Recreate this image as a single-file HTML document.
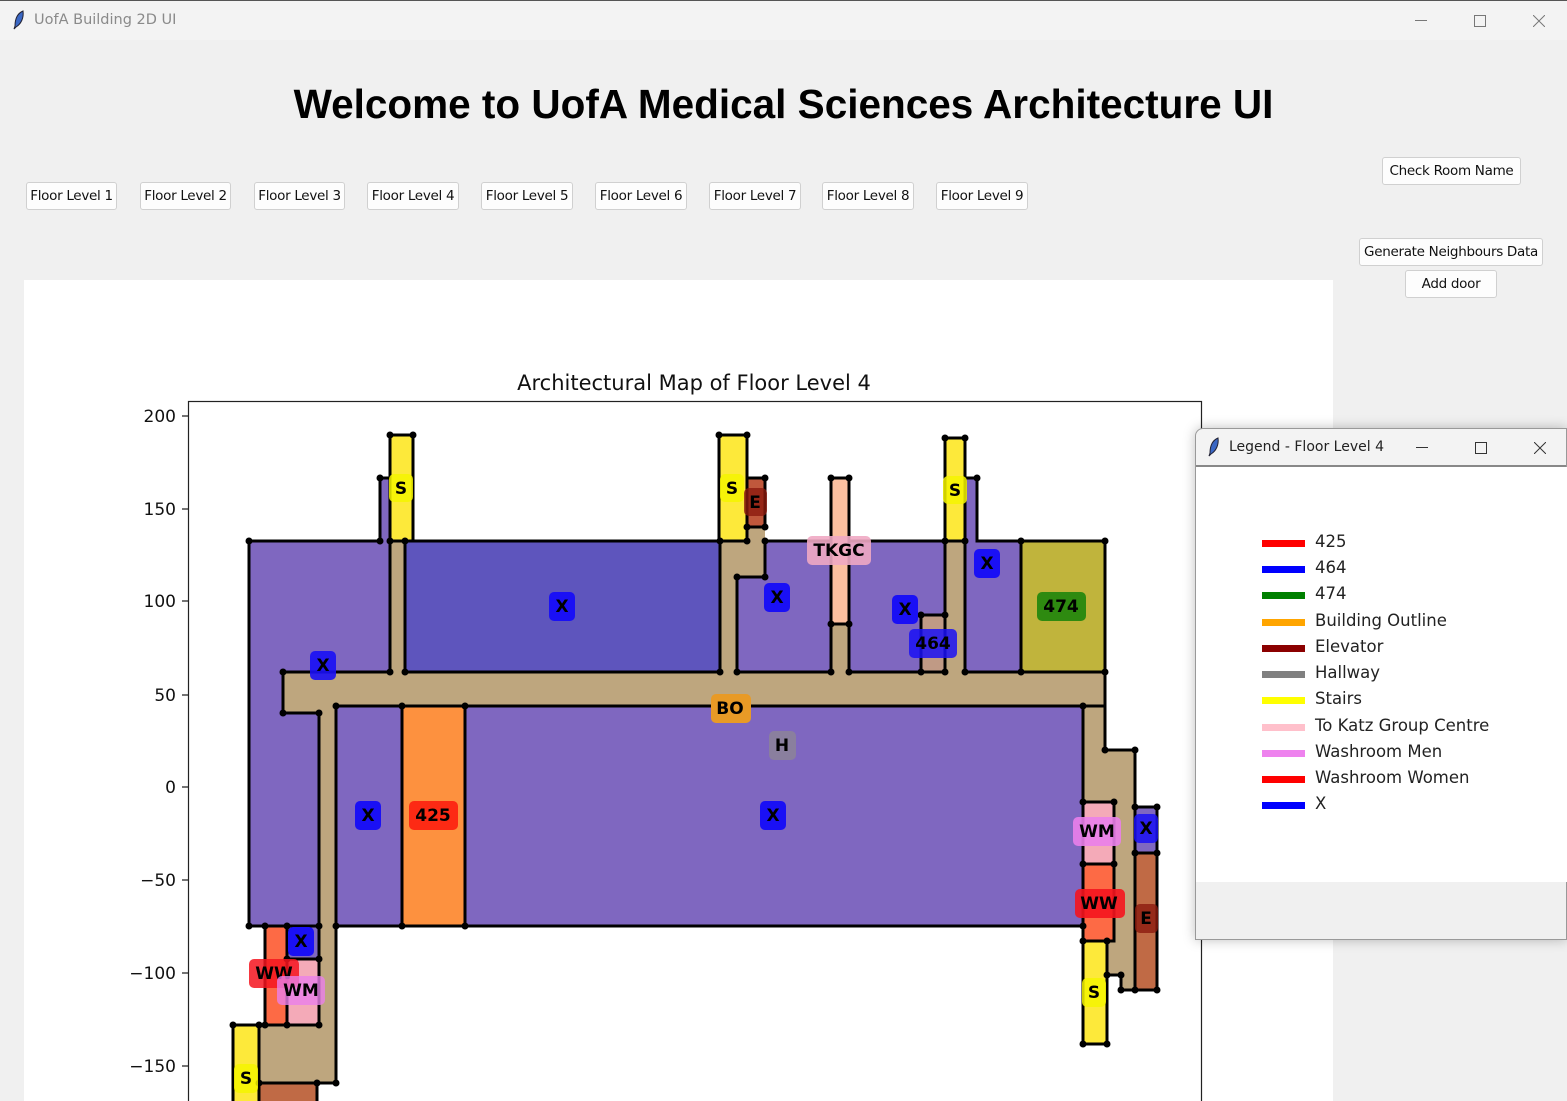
<!DOCTYPE html>
<html><head><meta charset="utf-8"><style>
*{margin:0;padding:0;box-sizing:border-box}
body{width:1567px;height:1101px;overflow:hidden;background:#f0f0f0;font-family:"Liberation Sans",sans-serif;position:relative}
.tb{position:absolute;left:0;top:0;width:1567px;height:40px;background:#f3f3f3;border-top:1px solid #555}
.tb span{position:absolute;left:34px;top:11px;font-size:14.5px;color:#8a8a8a;font-family:"DejaVu Sans",sans-serif}
h1{position:absolute;left:0;width:1567px;top:81px;text-align:center;font-size:40.5px;font-weight:bold;color:#000}
.btn{position:absolute;height:28px;background:#fdfdfd;border:1px solid #d0d0d0;border-radius:3px;font-family:"DejaVu Sans",sans-serif;font-size:13.5px;color:#111;text-align:center;line-height:26px;letter-spacing:-0.3px}
.canvas{position:absolute;left:24px;top:280px;width:1309px;height:821px;background:#fff}
.leg{position:absolute;left:1195px;top:428px;width:372px;height:512px;background:#f0f0f0;border:1px solid #999;border-radius:8px 0 0 0;box-shadow:0 0 12px rgba(0,0,0,.25)}
.leg .lt{height:38px;background:#f3f3f3;border-bottom:2px solid #888;border-radius:8px 0 0 0;position:relative}
.leg .lt span{position:absolute;left:33px;top:10px;font-size:14px;font-family:"DejaVu Sans",sans-serif;color:#222}
.leg .lc{position:absolute;left:0;top:38px;width:371px;height:415px;background:#fff}
.li{position:absolute;left:66px;font-family:"DejaVu Sans",sans-serif;font-size:16.5px;color:#222}
.li i{position:absolute;left:0;top:8px;width:43px;height:7px}
.li span{position:absolute;left:53px;top:0;white-space:nowrap}
</style></head><body>
<div class="tb"><svg style="position:absolute;left:12px;top:9px" width="14" height="20" viewBox="0 0 14 20"><path d="M11 1 C4 4 3 11 3 16 L2 19 L4 17 C9 14 12 8 11 1Z" fill="#3a67c4" stroke="#223" stroke-width="1"/></svg><span>UofA Building 2D UI</span>
<svg style="left:1415px;top:19px;position:absolute" width="12" height="2"><rect width="12" height="1" fill="#777"/></svg>
<svg style="left:1474px;top:14px;position:absolute" width="12" height="12"><rect x=".5" y=".5" width="11" height="11" fill="none" stroke="#777"/></svg>
<svg style="left:1533px;top:14px;position:absolute" width="12" height="12"><path d="M0 0L12 12M12 0L0 12" stroke="#777"/></svg></div>
<h1>Welcome to UofA Medical Sciences Architecture UI</h1>
<div class="btn" style="left:26px;top:182px;width:91px">Floor Level 1</div>
<div class="btn" style="left:140px;top:182px;width:91px">Floor Level 2</div>
<div class="btn" style="left:254px;top:182px;width:91px">Floor Level 3</div>
<div class="btn" style="left:367px;top:182px;width:92px">Floor Level 4</div>
<div class="btn" style="left:481px;top:182px;width:92px">Floor Level 5</div>
<div class="btn" style="left:595px;top:182px;width:92px">Floor Level 6</div>
<div class="btn" style="left:709px;top:182px;width:92px">Floor Level 7</div>
<div class="btn" style="left:822px;top:182px;width:92px">Floor Level 8</div>
<div class="btn" style="left:936px;top:182px;width:92px">Floor Level 9</div>
<div class="btn" style="left:1382px;top:157px;width:139px">Check Room Name</div>
<div class="btn" style="left:1359px;top:238px;width:184px">Generate Neighbours Data</div>
<div class="btn" style="left:1405px;top:270px;width:92px">Add door</div>
<div class="canvas"></div>
<svg style="position:absolute;left:0;top:0" width="1567" height="1101" viewBox="0 0 1567 1101" font-family="DejaVu Sans,sans-serif">
<defs><clipPath id="c"><rect x="24" y="280" width="1309" height="821"/></clipPath></defs>
<g clip-path="url(#c)">
<text x="694" y="390" font-size="21" text-anchor="middle" fill="#111">Architectural Map of Floor Level 4</text>
<rect x="188.5" y="401.5" width="1013" height="720" fill="none" stroke="#222" stroke-width="1.2"/>
<g font-size="17" text-anchor="end" fill="#111">
<text x="176" y="422">200</text><text x="176" y="515">150</text><text x="176" y="607">100</text><text x="176" y="701">50</text><text x="176" y="793">0</text><text x="176" y="886">−50</text><text x="176" y="979">−100</text><text x="176" y="1072">−150</text></g>
<g stroke="#222" stroke-width="1.2"><path d="M182 416H188M182 509H188M182 601H188M182 695H188M182 787H188M182 880H188M182 973H188M182 1066H188"/></g>
<g stroke="#000" stroke-width="3" stroke-linejoin="miter">
<path fill="#bea67e" d="M283 672H1105V750H1135V990H1121V975H1107V1044H1083V706H336V1083H259V1025H319V713H283Z" stroke="none"/>
<rect x="390" y="541" width="15" height="131" fill="#bea67e" stroke="none"/>
<path fill="#bea67e" stroke="none" d="M720 527H765V577H737V672H720Z"/>
<rect x="831" y="624" width="18" height="48" fill="#bea67e" stroke="none"/>
<rect x="945" y="541" width="20" height="131" fill="#bea67e" stroke="none"/>
<path fill="#7f67c0" d="M249 541H380V478H390V672H283V713H319V926H249Z"/>
<rect x="405" y="541" width="315" height="131" fill="#5e55bd"/>
<path fill="#7f67c0" d="M737 577H765V541H831V672H737Z"/>
<path fill="#7f67c0" d="M849 541H945V615H921V672H849Z"/>
<rect x="921" y="615" width="24" height="57" fill="#c09a85"/>
<path fill="#7f67c0" d="M965 478H977V541H1021V672H965Z"/>
<rect x="1021" y="541" width="84" height="131" fill="#c0b43c"/>
<rect x="390" y="435" width="23" height="106" fill="#fde93a"/>
<rect x="719" y="435" width="28" height="106" fill="#fde93a"/>
<rect x="747" y="478" width="18" height="49" fill="#c0583c"/>
<rect x="831" y="478" width="18" height="146" fill="#fcc0a0"/>
<rect x="945" y="438" width="20" height="103" fill="#fde93a"/>
<rect x="336" y="706" width="66" height="220" fill="#7f67c0"/>
<rect x="402" y="706" width="63" height="220" fill="#fd913f"/>
<rect x="465" y="706" width="618" height="220" fill="#7f67c0"/>
<rect x="265" y="926" width="22" height="99" fill="#fd6a45"/>
<rect x="287" y="926" width="32" height="33" fill="#7f67c0"/>
<rect x="287" y="959" width="32" height="66" fill="#f4aab8"/>
<rect x="233" y="1025" width="26" height="90" fill="#fde93a"/>
<rect x="259" y="1083" width="58" height="30" fill="#c06a45"/>
<rect x="1083" y="802" width="31" height="62" fill="#f4aab8"/>
<rect x="1083" y="864" width="31" height="77" fill="#fd6a45"/>
<rect x="1083" y="941" width="24" height="103" fill="#fde93a"/>
<rect x="1135" y="807" width="22" height="46" fill="#7f67c0"/>
<rect x="1135" y="853" width="22" height="137" fill="#c06a45"/>
<path fill="none" d="M283 672V713H319M336 706V1083H259M1083 706H1105V750H1135V990H1121V975H1107M1105 672V750"/>
</g>
<g fill="#000">
<circle cx="249" cy="541" r="3.5"/><circle cx="380" cy="541" r="3.5"/><circle cx="380" cy="478" r="3.5"/><circle cx="390" cy="435" r="3.5"/><circle cx="413" cy="435" r="3.5"/><circle cx="390" cy="541" r="3.5"/><circle cx="405" cy="541" r="3.5"/><circle cx="390" cy="672" r="3.5"/><circle cx="405" cy="672" r="3.5"/><circle cx="283" cy="672" r="3.5"/><circle cx="283" cy="713" r="3.5"/><circle cx="319" cy="713" r="3.5"/><circle cx="719" cy="435" r="3.5"/><circle cx="747" cy="435" r="3.5"/><circle cx="720" cy="541" r="3.5"/><circle cx="720" cy="672" r="3.5"/><circle cx="747" cy="541" r="3.5"/><circle cx="765" cy="478" r="3.5"/><circle cx="747" cy="527" r="3.5"/><circle cx="765" cy="527" r="3.5"/><circle cx="765" cy="541" r="3.5"/><circle cx="737" cy="577" r="3.5"/><circle cx="765" cy="577" r="3.5"/><circle cx="737" cy="672" r="3.5"/><circle cx="831" cy="478" r="3.5"/><circle cx="849" cy="478" r="3.5"/><circle cx="831" cy="624" r="3.5"/><circle cx="849" cy="624" r="3.5"/><circle cx="831" cy="672" r="3.5"/><circle cx="849" cy="672" r="3.5"/><circle cx="921" cy="615" r="3.5"/><circle cx="945" cy="615" r="3.5"/><circle cx="921" cy="672" r="3.5"/><circle cx="945" cy="672" r="3.5"/><circle cx="945" cy="438" r="3.5"/><circle cx="965" cy="438" r="3.5"/><circle cx="977" cy="478" r="3.5"/><circle cx="945" cy="541" r="3.5"/><circle cx="965" cy="541" r="3.5"/><circle cx="965" cy="672" r="3.5"/><circle cx="1021" cy="541" r="3.5"/><circle cx="1105" cy="541" r="3.5"/><circle cx="1021" cy="672" r="3.5"/><circle cx="1105" cy="672" r="3.5"/><circle cx="336" cy="706" r="3.5"/><circle cx="402" cy="706" r="3.5"/><circle cx="465" cy="706" r="3.5"/><circle cx="1083" cy="706" r="3.5"/><circle cx="1105" cy="750" r="3.5"/><circle cx="1135" cy="750" r="3.5"/><circle cx="249" cy="926" r="3.5"/><circle cx="265" cy="926" r="3.5"/><circle cx="287" cy="926" r="3.5"/><circle cx="319" cy="926" r="3.5"/><circle cx="336" cy="926" r="3.5"/><circle cx="402" cy="926" r="3.5"/><circle cx="465" cy="926" r="3.5"/><circle cx="1083" cy="926" r="3.5"/><circle cx="287" cy="959" r="3.5"/><circle cx="319" cy="959" r="3.5"/><circle cx="233" cy="1025" r="3.5"/><circle cx="259" cy="1025" r="3.5"/><circle cx="265" cy="1025" r="3.5"/><circle cx="287" cy="1025" r="3.5"/><circle cx="319" cy="1025" r="3.5"/><circle cx="259" cy="1083" r="3.5"/><circle cx="317" cy="1083" r="3.5"/><circle cx="336" cy="1083" r="3.5"/><circle cx="1083" cy="802" r="3.5"/><circle cx="1114" cy="802" r="3.5"/><circle cx="1083" cy="864" r="3.5"/><circle cx="1114" cy="864" r="3.5"/><circle cx="1083" cy="941" r="3.5"/><circle cx="1107" cy="941" r="3.5"/><circle cx="1083" cy="1044" r="3.5"/><circle cx="1107" cy="1044" r="3.5"/><circle cx="1135" cy="807" r="3.5"/><circle cx="1157" cy="807" r="3.5"/><circle cx="1135" cy="853" r="3.5"/><circle cx="1157" cy="853" r="3.5"/><circle cx="1121" cy="990" r="3.5"/><circle cx="1135" cy="990" r="3.5"/><circle cx="1157" cy="990" r="3.5"/><circle cx="1107" cy="975" r="3.5"/><circle cx="1121" cy="975" r="3.5"/>
</g>
<g font-weight="bold" font-size="17" text-anchor="middle">
<rect x="389" y="474" width="24" height="28" rx="5" fill="#f5f500" opacity=".85"/><text x="401" y="494">S</text>
<rect x="720" y="474" width="24" height="28" rx="5" fill="#f5f500" opacity=".85"/><text x="732" y="494">S</text>
<rect x="744" y="488" width="23" height="28" rx="5" fill="#8b1a0e" opacity=".8"/><text x="755" y="508">E</text>
<rect x="943" y="476" width="24" height="28" rx="5" fill="#f5f500" opacity=".85"/><text x="955" y="496">S</text>
<rect x="807" y="536" width="64" height="29" rx="5" fill="#f0a9c3" opacity=".9"/><text x="839" y="556">TKGC</text>
<rect x="549" y="592" width="26" height="29" rx="5" fill="#1a10f5"/><text x="562" y="612">X</text>
<rect x="764" y="583" width="26" height="29" rx="5" fill="#1a10f5"/><text x="777" y="603">X</text>
<rect x="892" y="595" width="26" height="29" rx="5" fill="#1a10f5"/><text x="905" y="615">X</text>
<rect x="909" y="629" width="48" height="29" rx="5" fill="#1a10f5" opacity=".85"/><text x="933" y="649">464</text>
<rect x="974" y="549" width="26" height="29" rx="5" fill="#1a10f5"/><text x="987" y="569">X</text>
<rect x="1037" y="592" width="49" height="29" rx="5" fill="#2e8a10"/><text x="1061" y="612">474</text>
<rect x="310" y="651" width="26" height="29" rx="5" fill="#1a10f5" opacity=".9"/><text x="323" y="671">X</text>
<rect x="711" y="694" width="40" height="29" rx="5" fill="#e89a26"/><text x="730" y="714">BO</text>
<rect x="769" y="731" width="27" height="29" rx="5" fill="#8a7f9e"/><text x="782" y="751">H</text>
<rect x="355" y="801" width="26" height="29" rx="5" fill="#1a10f5"/><text x="368" y="821">X</text>
<rect x="409" y="801" width="49" height="29" rx="5" fill="#fd2a14"/><text x="433" y="821">425</text>
<rect x="760" y="801" width="26" height="29" rx="5" fill="#1a10f5"/><text x="773" y="821">X</text>
<rect x="1073" y="817" width="48" height="29" rx="5" fill="#ea80ea" opacity=".9"/><text x="1097" y="837">WM</text>
<rect x="1134" y="814" width="24" height="29" rx="5" fill="#1a10f5" opacity=".85"/><text x="1146" y="834">X</text>
<rect x="1075" y="889" width="50" height="29" rx="5" fill="#f5141e" opacity=".9"/><text x="1099" y="909">WW</text>
<rect x="1135" y="904" width="23" height="29" rx="5" fill="#8b1a0e" opacity=".8"/><text x="1146" y="924">E</text>
<rect x="288" y="927" width="26" height="29" rx="5" fill="#1a10f5"/><text x="301" y="947">X</text>
<rect x="249" y="959" width="50" height="29" rx="5" fill="#f5141e" opacity=".85"/><text x="274" y="979">WW</text>
<rect x="277" y="976" width="48" height="29" rx="5" fill="#ea80ea" opacity=".8"/><text x="301" y="996">WM</text>
<rect x="1082" y="978" width="24" height="29" rx="5" fill="#f5f500" opacity=".85"/><text x="1094" y="998">S</text>
<rect x="234" y="1064" width="24" height="29" rx="5" fill="#f5f500" opacity=".85"/><text x="246" y="1084">S</text>
</g>
</g>
</svg>
<div class="leg"><div class="lt"><svg style="position:absolute;left:11px;top:8px" width="14" height="20" viewBox="0 0 14 20"><path d="M11 1 C4 4 3 11 3 16 L2 19 L4 17 C9 14 12 8 11 1Z" fill="#3a67c4" stroke="#223" stroke-width="1"/></svg><span>Legend - Floor Level 4</span>
<svg style="position:absolute;left:220px;top:18px" width="12" height="2"><rect width="12" height="1" fill="#333"/></svg>
<svg style="position:absolute;left:279px;top:13px" width="12" height="12"><rect x=".5" y=".5" width="11" height="11" fill="none" stroke="#333"/></svg>
<svg style="position:absolute;left:338px;top:13px" width="12" height="12"><path d="M0 0L12 12M12 0L0 12" stroke="#333"/></svg></div>
<div class="lc">
<div class="li" style="top:65px"><i style="background:#f00"></i><span>425</span></div>
<div class="li" style="top:91px"><i style="background:#00f"></i><span>464</span></div>
<div class="li" style="top:117px"><i style="background:#008000"></i><span>474</span></div>
<div class="li" style="top:144px"><i style="background:#ffa500"></i><span>Building Outline</span></div>
<div class="li" style="top:170px"><i style="background:#8b0000"></i><span>Elevator</span></div>
<div class="li" style="top:196px"><i style="background:#808080"></i><span>Hallway</span></div>
<div class="li" style="top:222px"><i style="background:#ff0"></i><span>Stairs</span></div>
<div class="li" style="top:249px"><i style="background:#ffc0cb"></i><span>To Katz Group Centre</span></div>
<div class="li" style="top:275px"><i style="background:#ee82ee"></i><span>Washroom Men</span></div>
<div class="li" style="top:301px"><i style="background:#f00"></i><span>Washroom Women</span></div>
<div class="li" style="top:327px"><i style="background:#00f"></i><span>X</span></div>
</div></div>
</body></html>
